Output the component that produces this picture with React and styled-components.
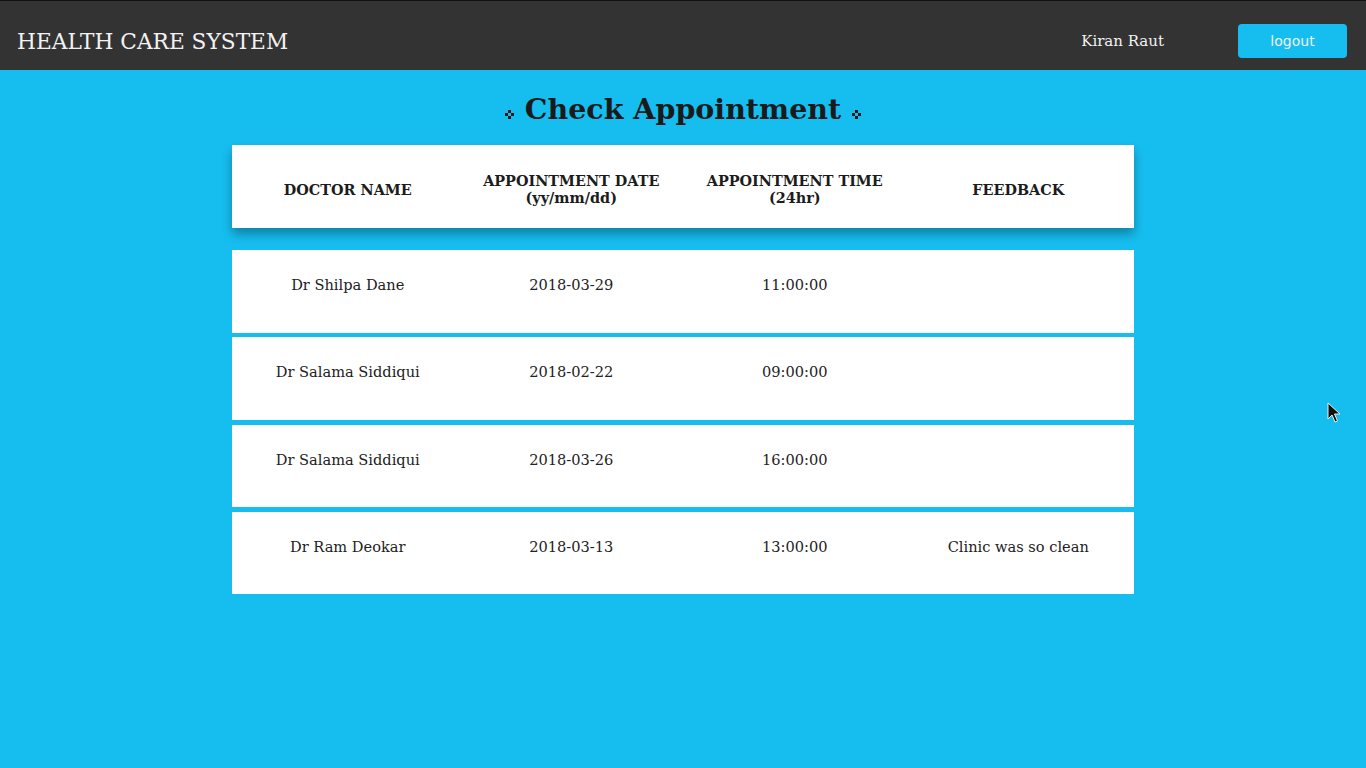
import React from "react";
import styled, { createGlobalStyle } from "styled-components";

const Global = createGlobalStyle`
  html, body { margin: 0; padding: 0; }
  body {
    background: #16bef0;
    font-family: "DejaVu Serif", serif;
    color: #1c1c1c;
    min-height: 768px;
  }
`;

const Page = styled.div`
  min-height: 768px;
  background: #16bef0;
  position: relative;
`;

const Nav = styled.nav`
  height: 70px;
  box-sizing: border-box;
  background: #333333;
  border-top: 1px solid #111;
  display: flex;
  align-items: center;
  padding: 11px 19px 0 17px;
`;

const Brand = styled.div`
  font-family: "DejaVu Serif", serif;
  font-size: 21.7px;
  color: #f2f2f2;
  flex: 1;
`;

const User = styled.div`
  font-family: "DejaVu Serif", serif;
  font-size: 15px;
  color: #f2f2f2;
  margin-right: 74px;
`;

const Logout = styled.button`
  width: 109px;
  height: 34px;
  border: none;
  border-radius: 4px;
  background: #16bef0;
  color: #f0f0f0;
  font-family: "DejaVu Sans", sans-serif;
  font-size: 14px;
  cursor: pointer;
`;

const Title = styled.h2`
  margin: 23px 0 19px;
  display: flex;
  justify-content: center;
  align-items: center;
  gap: 11px;
  font-family: "DejaVu Serif", serif;
  font-size: 28.5px;
  font-weight: bold;
  color: #1a1a1a;
  line-height: 33px;
`;

const Ornament = styled.svg`
  width: 9px;
  height: 9px;
  margin-top: 10px;
`;

const Table = styled.div`
  width: 902px;
  margin: 0 auto;
  display: flex;
  flex-direction: column;
`;

const Cols = styled.div`
  display: grid;
  grid-template-columns: repeat(4, 1fr);
  padding: 0 4px;
  background: #ffffff;
  box-sizing: border-box;
`;

const HeadRow = styled(Cols)`
  height: 83px;
  align-items: center;
  box-shadow: 0 6px 10px rgba(0, 0, 0, 0.32);
  margin-bottom: 22px;
  position: relative;
  z-index: 1;
`;

const HeadCell = styled.div`
  text-align: center;
  font-weight: bold;
  font-size: 14.4px;
  color: #1c1c1c;
  margin-top: 5px;
`;

const Row = styled(Cols)`
  height: 82.6px;
  align-items: start;
  padding-top: 26px;
  margin-bottom: 4.7px;
`;

const Cell = styled.div`
  text-align: center;
  font-size: 14.6px;
  color: #222;
`;

const Cursor = styled.svg`
  position: absolute;
  left: 1327px;
  top: 402px;
  width: 14px;
  height: 22px;
`;

const rows = [
  ["Dr Shilpa Dane", "2018-03-29", "11:00:00", ""],
  ["Dr Salama Siddiqui", "2018-02-22", "09:00:00", ""],
  ["Dr Salama Siddiqui", "2018-03-26", "16:00:00", ""],
  ["Dr Ram Deokar", "2018-03-13", "13:00:00", "Clinic was so clean"],
];

const Orn = () => (
  <Ornament viewBox="0 0 9 9">
    <rect x="3" y="0" width="3" height="3" fill="#1a1a1a" />
    <rect x="0" y="3" width="3" height="3" fill="#1a1a1a" />
    <rect x="6" y="3" width="3" height="3" fill="#1a1a1a" />
    <rect x="3" y="6" width="3" height="3" fill="#1a1a1a" />
  </Ornament>
);

export default function App() {
  return (
    <>
      <Global />
      <Page>
        <Nav>
          <Brand>HEALTH CARE SYSTEM</Brand>
          <User>Kiran Raut</User>
          <Logout>logout</Logout>
        </Nav>
        <Title>
          <Orn />
          Check Appointment
          <Orn />
        </Title>
        <Table>
          <HeadRow>
            <HeadCell>DOCTOR NAME</HeadCell>
            <HeadCell>
              APPOINTMENT DATE
              <br />
              (yy/mm/dd)
            </HeadCell>
            <HeadCell>
              APPOINTMENT TIME
              <br />
              (24hr)
            </HeadCell>
            <HeadCell>FEEDBACK</HeadCell>
          </HeadRow>
          {rows.map((r, i) => (
            <Row key={i}>
              {r.map((c, j) => (
                <Cell key={j}>{c}</Cell>
              ))}
            </Row>
          ))}
        </Table>
        <Cursor viewBox="0 0 14 22">
          <path
            d="M1 1 L1 17 L5 13 L8 20 L10.5 19 L7.5 12 L13 12 Z"
            fill="#111"
            stroke="#eee"
            strokeWidth="1"
          />
        </Cursor>
      </Page>
    </>
  );
}
